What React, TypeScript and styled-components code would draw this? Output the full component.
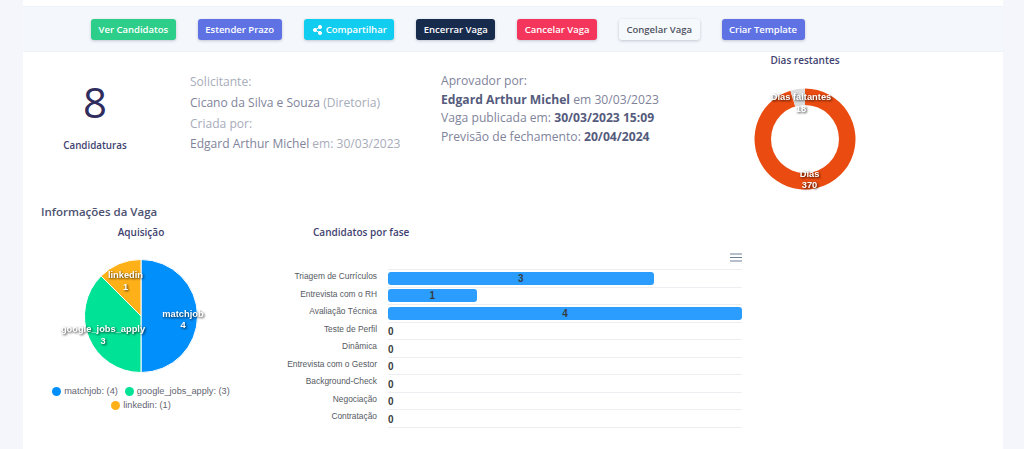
import React from 'react';
import styled, { createGlobalStyle } from 'styled-components';

const GlobalStyle = createGlobalStyle`
    html, body {
        margin: 0;
        height: 449px;
        overflow: hidden;
        background: #f4f6fb;
        font-family: "Open Sans", "Liberation Sans", sans-serif;
    }
`;

const Card = styled.div`
    margin: 0 21px 0 23px;
    height: 449px;
    padding-top: 6px;
    box-sizing: border-box;
    background: #fff;
`;

const Toolbar = styled.div`
    height: 46px;
    box-sizing: border-box;
    padding: 12px 0 0 68px;
    display: flex;
    gap: 22px;
    background: #f4f7fb;
    border-top: 1px solid #eef1f6;
    border-bottom: 1px solid #eef1f6;
`;

const Button = styled.div<{ $bg: string; $fg?: string; $hasIcon?: boolean }>`
    height: 21px;
    padding: 0 7.5px 0 ${({ $hasIcon }) => ($hasIcon ? 9 : 7.5)}px;
    display: flex;
    align-items: center;
    gap: 4px;
    border-radius: 3px;
    background: ${({ $bg }) => $bg};
    color: ${({ $fg }) => $fg || '#fff'};
    font-size: 9.5px;
    font-weight: 600;
    white-space: nowrap;
    box-shadow: 0 1px 3px rgba(50, 50, 93, 0.25);
`;

const StatsRow = styled.div`
    display: grid;
    grid-template-columns: 167px 251px 304px 120px;
    height: 150px;
`;

const CountBlock = styled.div`
    width: 144px;
    padding-top: 25px;
    text-align: center;
`;

const CountValue = styled.div`
    font-size: 42px;
    line-height: 50px;
    color: #2f2d5e;
`;

const CountLabel = styled.div`
    margin-top: 12px;
    font-size: 9.8px;
    font-weight: 600;
    color: #3f4270;
`;

const InfoColumn = styled.div<{ $size: number; $lineHeight: number; $top: number }>`
    padding-top: ${({ $top }) => $top}px;
    font-size: ${({ $size }) => $size}px;
    line-height: ${({ $lineHeight }) => $lineHeight}px;
    color: #7f849b;
    white-space: nowrap;
`;

const Muted = styled.span`
    color: #a7acba;
`;

const Strong = styled.strong`
    font-weight: 700;
    color: #555b7c;
`;

const DonutBlock = styled.div`
    display: flex;
    flex-direction: column;
    align-items: center;
`;

const ChartTitle = styled.div`
    font-size: 10px;
    font-weight: 600;
    line-height: 14px;
    color: #3f4270;
    white-space: nowrap;
`;

const DonutTitle = styled(ChartTitle)`
    padding: 1px 0 12px;
`;

const DonutSvg = styled.svg`
    display: block;
    overflow: visible;
`;

const Section = styled.div`
    padding: 2px 0 0 18px;
`;

const SectionTitle = styled.div`
    font-size: 11.5px;
    font-weight: 600;
    line-height: 16px;
    color: #4d5170;
`;

const ChartsRow = styled.div`
    display: flex;
    margin-top: 5px;
`;

const PieColumn = styled.div`
    width: 200px;
    display: flex;
    flex-direction: column;
    align-items: center;
`;

const PieSvg = styled.svg`
    display: block;
    margin-top: 19px;
    overflow: visible;
`;

const SliceLabel = styled.text`
    fill: #fff;
    font-family: "Liberation Sans", Arial, sans-serif;
    font-size: 9.3px;
    font-weight: 700;
    text-anchor: middle;
    filter: drop-shadow(1px 1px 1px rgba(0, 0, 0, 0.75));
`;

const Legend = styled.div`
    margin-top: 10px;
    display: flex;
    flex-wrap: wrap;
    justify-content: center;
    column-gap: 7px;
`;

const LegendItem = styled.div`
    display: flex;
    align-items: center;
    gap: 3px;
    height: 14px;
    font-family: "Liberation Sans", Arial, sans-serif;
    font-size: 9.2px;
    color: #5f6470;
    white-space: nowrap;
`;

const LegendDot = styled.span<{ $color: string }>`
    width: 9px;
    height: 9px;
    border-radius: 50%;
    background: ${({ $color }) => $color};
`;

const BarColumn = styled.div`
    width: 461px;
    margin-left: 40px;
`;

const BarTitle = styled(ChartTitle)`
    padding-left: 32px;
`;

const MenuRow = styled.div`
    height: 30px;
    display: flex;
    justify-content: flex-end;
    align-items: flex-end;
    padding: 0 0 7px;
    box-sizing: border-box;
`;

const BarRow = styled.div`
    display: grid;
    grid-template-columns: 96px 1fr;
    column-gap: 11px;
    height: 17.5px;
`;

const BarLabel = styled.div`
    padding-top: 1px;
    font-family: "Liberation Sans", Arial, sans-serif;
    font-size: 8.4px;
    line-height: 13px;
    text-align: right;
    color: #555a62;
    white-space: nowrap;
`;

const BarTrack = styled.div`
    box-sizing: border-box;
    padding-top: 1.5px;
    border-top: 1px solid #eceef1;
    font-family: "Liberation Sans", Arial, sans-serif;
    font-size: 10px;
    font-weight: 700;
    color: #373d3f;
`;

const BarFill = styled.div`
    height: 13px;
    line-height: 13px;
    border-radius: 3px;
    background: #2b9dff;
    text-align: center;
`;

const ZeroValue = styled.div`
    line-height: 15px;
`;

const BarEnd = styled.div`
    margin-left: 107px;
    border-top: 1px solid #eceef1;
`;

const buttons = [
    { label: 'Ver Candidatos', bg: '#2dce89' },
    { label: 'Estender Prazo', bg: '#5e72e4' },
    { label: 'Compartilhar', bg: '#11cdef', share: true },
    { label: 'Encerrar Vaga', bg: '#172b4d' },
    { label: 'Cancelar Vaga', bg: '#f5365c' },
    { label: 'Congelar Vaga', bg: '#f6f9fc', fg: '#4d5160' },
    { label: 'Criar Template', bg: '#5e72e4' },
];

const phases = [
    { label: 'Triagem de Currículos', value: 3 },
    { label: 'Entrevista com o RH', value: 1 },
    { label: 'Avaliação Técnica', value: 4 },
    { label: 'Teste de Perfil', value: 0 },
    { label: 'Dinâmica', value: 0 },
    { label: 'Entrevista com o Gestor', value: 0 },
    { label: 'Background-Check', value: 0 },
    { label: 'Negociação', value: 0 },
    { label: 'Contratação', value: 0 },
];

const point = (cx: number, cy: number, r: number, deg: number) => {
    const rad = ((deg - 90) * Math.PI) / 180;
    return `${cx + r * Math.cos(rad)} ${cy + r * Math.sin(rad)}`;
};

const slice = (cx: number, cy: number, r: number, from: number, to: number) =>
    `M${cx} ${cy} L${point(cx, cy, r, from)} A${r} ${r} 0 ${to - from > 180 ? 1 : 0} 1 ${point(cx, cy, r, to)} Z`;

const ShareIcon = () => (
    <svg width="9" height="10" viewBox="0 0 9 10" fill="#fff" stroke="#fff" strokeWidth="1">
        <circle cx="7" cy="2" r="1.6" />
        <circle cx="2" cy="5" r="1.6" />
        <circle cx="7" cy="8" r="1.6" />
        <path d="M7 2 2 5l5 3" fill="none" />
    </svg>
);

const Donut = () => (
    <DonutSvg width="120" height="120" viewBox="0 0 120 120">
        <path d={slice(60, 60, 50.5, 0, 343.3)} fill="#e94b10" />
        <path d={slice(60, 60, 50.5, 343.3, 360)} fill="#dcdcdc" />
        <circle cx="60" cy="60" r="34" fill="#fff" />
        <SliceLabel x="56" y="21">Dias faltantes</SliceLabel>
        <SliceLabel x="56" y="33">18</SliceLabel>
        <SliceLabel x="64.5" y="98">Dias</SliceLabel>
        <SliceLabel x="64.5" y="109">370</SliceLabel>
    </DonutSvg>
);

const Pie = () => (
    <PieSvg width="116" height="116" viewBox="0 0 116 116">
        <g stroke="#fff" strokeWidth="1">
            <path d={slice(58, 58, 56.5, 0, 180)} fill="#008ffb" />
            <path d={slice(58, 58, 56.5, 180, 315)} fill="#00e396" />
            <path d={slice(58, 58, 56.5, 315, 360)} fill="#feb019" />
        </g>
        <SliceLabel x="100" y="58.7">matchjob</SliceLabel>
        <SliceLabel x="100" y="70">4</SliceLabel>
        <SliceLabel x="42.5" y="20">linkedin</SliceLabel>
        <SliceLabel x="42.5" y="31.7">1</SliceLabel>
        <SliceLabel x="20" y="74">google_jobs_apply</SliceLabel>
        <SliceLabel x="20" y="85.7">3</SliceLabel>
    </PieSvg>
);

const MenuIcon = () => (
    <svg width="12" height="9" viewBox="0 0 12 9" stroke="#6e8192" strokeWidth="1">
        <path d="M0 1h12M0 4.5h12M0 8h12" />
    </svg>
);

export default function App() {
    return (
        <>
            <GlobalStyle />
            <Card>
                <Toolbar>
                    {buttons.map((b) => (
                        <Button key={b.label} $bg={b.bg} $fg={b.fg} $hasIcon={b.share}>
                            {b.share && <ShareIcon />}
                            {b.label}
                        </Button>
                    ))}
                </Toolbar>
                <StatsRow>
                    <CountBlock>
                        <CountValue>8</CountValue>
                        <CountLabel>Candidaturas</CountLabel>
                    </CountBlock>
                    <InfoColumn $size={12.05} $lineHeight={20.8} $top={20}>
                        <Muted>Solicitante:</Muted>
                        <br />
                        Cicano da Silva e Souza <Muted>(Diretoria)</Muted>
                        <br />
                        <Muted>Criada por:</Muted>
                        <br />
                        Edgard Arthur Michel <Muted>em: 30/03/2023</Muted>
                    </InfoColumn>
                    <InfoColumn $size={12.15} $lineHeight={18.5} $top={20}>
                        Aprovador por:
                        <br />
                        <Strong>Edgard Arthur Michel</Strong> em 30/03/2023
                        <br />
                        Vaga publicada em: <Strong>30/03/2023 15:09</Strong>
                        <br />
                        Previsão de fechamento: <Strong>20/04/2024</Strong>
                    </InfoColumn>
                    <DonutBlock>
                        <DonutTitle>Dias restantes</DonutTitle>
                        <Donut />
                    </DonutBlock>
                </StatsRow>
                <Section>
                    <SectionTitle>Informações da Vaga</SectionTitle>
                    <ChartsRow>
                        <PieColumn>
                            <ChartTitle>Aquisição</ChartTitle>
                            <Pie />
                            <Legend>
                                <LegendItem>
                                    <LegendDot $color="#008ffb" />
                                    matchjob: (4)
                                </LegendItem>
                                <LegendItem>
                                    <LegendDot $color="#00e396" />
                                    google_jobs_apply: (3)
                                </LegendItem>
                                <LegendItem>
                                    <LegendDot $color="#feb019" />
                                    linkedin: (1)
                                </LegendItem>
                            </Legend>
                        </PieColumn>
                        <BarColumn>
                            <BarTitle>Candidatos por fase</BarTitle>
                            <MenuRow>
                                <MenuIcon />
                            </MenuRow>
                            {phases.map((p) => (
                                <BarRow key={p.label}>
                                    <BarLabel>{p.label}</BarLabel>
                                    <BarTrack>
                                        {p.value > 0 ? (
                                            <BarFill style={{ width: `${(p.value / 4) * 100}%` }}>{p.value}</BarFill>
                                        ) : (
                                            <ZeroValue>{p.value}</ZeroValue>
                                        )}
                                    </BarTrack>
                                </BarRow>
                            ))}
                            <BarEnd />
                        </BarColumn>
                    </ChartsRow>
                </Section>
            </Card>
        </>
    );
}
